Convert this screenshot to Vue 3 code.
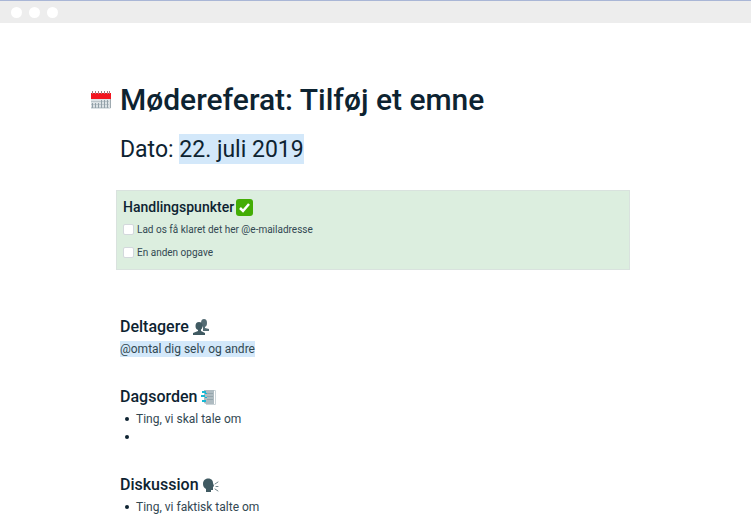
<template>
  <div class="window">
    <header class="window-bar">
      <span v-for="n in 3" :key="n" class="dot"></span>
    </header>

    <main class="doc">
      <h1 class="doc-title">
        <svg class="calendar" viewBox="0 0 22 20" aria-hidden="true">
          <path d="M1 3h20v15l-1 1H1z" fill="#dce2e5" />
          <path d="M1 3h20v6H1z" fill="#f3151f" />
          <path d="M2.5 1v3M5.5 1v3M8.5 1v3M11.5 1v3M14.5 1v3M17.5 1v3M19.5 1v3" stroke="#a8797d" />
          <path d="M1 11.5h18M1 14.5h18M1 17.5h18" stroke="#bcc6cb" />
          <path d="M2.5 13v5M5.5 13v5M8.5 13v5M11.5 10v8M14.5 10v8M17.5 10v8" stroke="#93a1a9" />
          <path d="M20.5 9v9" stroke="#9faab0" />
        </svg>
        <span>Mødereferat: Tilføj et emne</span>
      </h1>
      <h2 class="doc-date">Dato: <mark>22. juli 2019</mark></h2>

      <section class="actions">
        <h3 class="heading">
          Handlingspunkter
          <svg class="check" viewBox="0 0 17 17" aria-hidden="true">
            <rect width="17" height="17" rx="3" fill="#43ad05" />
            <path d="M4 9l3 3 6-7" fill="none" stroke="#fff" stroke-width="2.5" />
          </svg>
        </h3>
        <label v-for="task in tasks" :key="task.text" class="task">
          <input v-model="task.done" type="checkbox" />
          <span>{{ task.text }}</span>
        </label>
      </section>

      <section class="block">
        <h3 class="heading">
          Deltagere
          <svg class="icon" viewBox="0 0 17 17" aria-hidden="true">
            <g fill="#546c74">
              <ellipse cx="11" cy="4" rx="3" ry="4" />
              <path d="M10 7h2v2l4 1v2h-6z" />
            </g>
            <g fill="#405a62">
              <ellipse cx="6" cy="7" rx="3.5" ry="4" />
              <path d="M5 10h3v2l4 2v2H0v-2l5-2z" />
            </g>
          </svg>
        </h3>
        <p class="mention"><mark>@omtal dig selv og andre</mark></p>
      </section>

      <section class="block">
        <h3 class="heading">
          Dagsorden
          <svg class="icon" viewBox="0 0 17 17" aria-hidden="true">
            <path d="M3 1h10v14H5l-2-1z" fill="#aebbc1" />
            <path d="M13 1.5h1.5v14H5" fill="none" stroke="#cbd4d8" />
            <path d="M6 4.5h6M6 7.5h6M6 10.5h6" stroke="#95a5ac" />
            <path d="M1 3h4M0 7h4M1 12h4" stroke="#16b8d4" stroke-width="2" />
            <path d="M4 4.5h2M4 8.5h2" stroke="#16b8d4" />
          </svg>
        </h3>
        <ul class="list">
          <li>Ting, vi skal tale om</li>
          <li></li>
        </ul>
      </section>

      <section class="block">
        <h3 class="heading">
          Diskussion
          <svg class="icon" viewBox="0 0 17 17" aria-hidden="true">
            <path d="M0 7c0-7 10-7 10-1l1 3-1 1v3H8v2H3v-3C1 11 0 9 0 7z" fill="#405a62" />
            <path d="M12 7l3-2M13 9.5h2M12 12l3 2" stroke="#76898f" stroke-linecap="round" />
          </svg>
        </h3>
        <ul class="list">
          <li>Ting, vi faktisk talte om</li>
        </ul>
      </section>
    </main>
  </div>
</template>

<script setup>
import { ref } from 'vue'

const tasks = ref([
  { text: 'Lad os få klaret det her @e-mailadresse', done: false },
  { text: 'En anden opgave', done: false },
])
</script>

<style>
body { margin: 0; background: #fff; }
</style>

<style scoped>
.window {
  font-family: Roboto, "Liberation Sans", sans-serif;
  color: #0d2331;
}

.window-bar {
  display: flex;
  align-items: center;
  gap: 7px;
  height: 22px;
  padding-left: 11px;
  background: #ededed;
  border-top: 1px solid #a9b6d6;
}

.dot { width: 11px; height: 11px; border-radius: 50%; background: #fff; }

.doc { padding: 57px 121px 8px 90px; }
h1, h2, h3, p, ul { margin: 0; }
mark { color: inherit; background: #d3e8fa; }

.doc-title {
  display: flex;
  align-items: center;
  gap: 8px;
  font-size: 30px;
  font-weight: 500;
  line-height: 40px;
  white-space: nowrap;
}

.calendar { width: 22px; height: 20px; }

.doc-date {
  margin: 14px 0 0 30px;
  font-size: 23px;
  font-weight: 400;
  line-height: 28px;
}
.doc-date mark { display: inline-block; padding-top: 2px; }

.actions {
  margin: 26px 0 0 26px;
  padding: 5px 6px;
  background: #dceedf;
  border: 1px solid #d9e2de;
}
.actions .heading { gap: 2px; margin-bottom: 0; font-size: 14px; line-height: 22px; }

.heading {
  display: flex;
  align-items: center;
  gap: 4px;
  margin-bottom: 1px;
  font-size: 16px;
  font-weight: 500;
  line-height: 24px;
}

.check, .icon { width: 17px; height: 17px; }

.task {
  display: flex;
  align-items: center;
  gap: 3px;
  height: 23px;
  color: #324852;
  font-size: 10px;
}

.task input {
  appearance: none;
  width: 11px;
  height: 11px;
  margin: 0;
  background: #fff;
  border: 1px solid #d3d8dc;
  border-radius: 2px;
}
.task input:checked { background: #43ad05; }

.block { margin: 27px 0 0 30px; }
.actions + .block { margin-top: 45px; }
.mention, .list { color: #324852; font-size: 12px; line-height: 18px; }
.mention mark { display: inline-block; line-height: 16px; }

.list { padding-left: 5px; list-style: none; }
.list li { display: flex; align-items: center; gap: 7px; min-height: 18px; }
.list li::before {
  content: '';
  width: 4px;
  height: 4px;
  border-radius: 50%;
  background: #0d2331;
}
</style>
